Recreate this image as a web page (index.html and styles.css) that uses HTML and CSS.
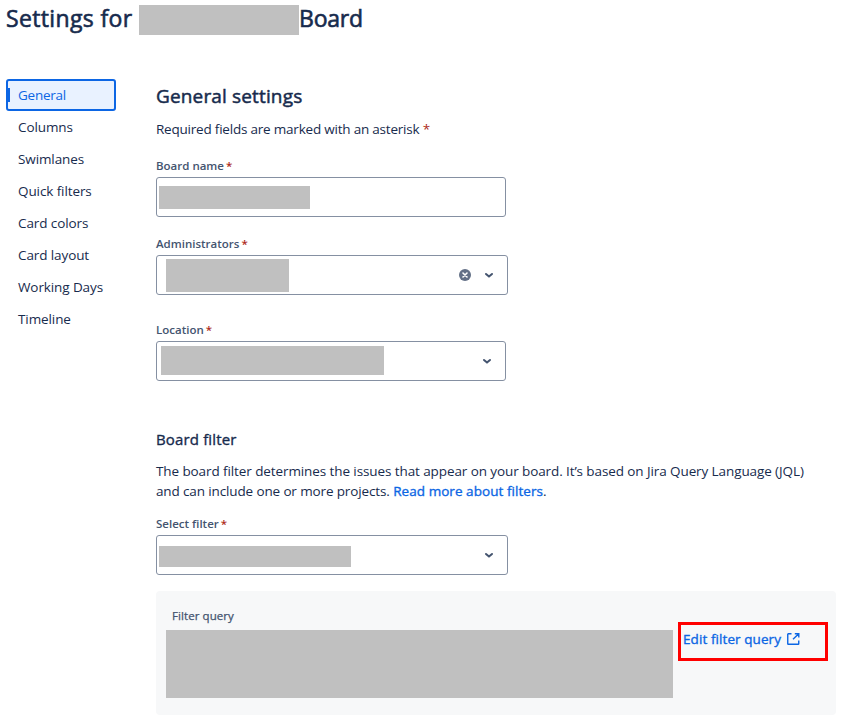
FILE: index.html
```html
<!DOCTYPE html>
<html lang="en">
<head>
<meta charset="utf-8">
<title>Board settings</title>
<link rel="stylesheet" href="styles.css">
</head>
<body>
<header class="page-header">
  <h1 class="page-title"><span class="title-lead">Settings for</span><span class="redacted redacted-title"></span><span class="title-end">Board</span></h1>
</header>
<div class="layout">
  <nav class="sidebar">
    <a class="nav-item active">General</a>
    <a class="nav-item">Columns</a>
    <a class="nav-item">Swimlanes</a>
    <a class="nav-item">Quick filters</a>
    <a class="nav-item">Card colors</a>
    <a class="nav-item">Card layout</a>
    <a class="nav-item">Working Days</a>
    <a class="nav-item">Timeline</a>
  </nav>
  <main class="content">
    <h2 class="section-title">General settings</h2>
    <p class="hint">Required fields are marked with an asterisk <span class="required">*</span></p>

    <div class="field">
      <div class="label"><span>Board name</span><span class="required">*</span></div>
      <div class="control"><span class="redacted redacted-name"></span></div>
    </div>

    <div class="field field-admins">
      <div class="label"><span>Administrators</span><span class="required">*</span></div>
      <div class="control wide">
        <span class="redacted redacted-admins"></span>
        <span class="indicators">
          <svg class="clear" width="12" height="12" viewBox="0 0 12 12"><circle cx="6" cy="6" r="6" fill="#626f86"/><path d="M4 4l4 4M8 4l-4 4" stroke="#fff" stroke-width="1.6" stroke-linecap="round"/></svg>
          <svg width="10" height="8" viewBox="0 0 10 8"><path d="M2 3l3 2.6L8 3" fill="none" stroke="#44546f" stroke-width="2" stroke-linecap="round" stroke-linejoin="round"/></svg>
        </span>
      </div>
    </div>

    <div class="field field-location">
      <div class="label"><span>Location</span><span class="required">*</span></div>
      <div class="control">
        <span class="redacted redacted-location"></span>
        <span class="indicators">
          <svg width="10" height="8" viewBox="0 0 10 8"><path d="M2 3l3 2.6L8 3" fill="none" stroke="#44546f" stroke-width="2" stroke-linecap="round" stroke-linejoin="round"/></svg>
        </span>
      </div>
    </div>

    <h3 class="sub-title">Board filter</h3>
    <p class="description"><span class="line-one">The board filter determines the issues that appear on your board. It’s based on Jira Query Language (JQL)</span><br><span class="line-two">and can include one or more projects.</span> <a class="link">Read more about filters</a>.</p>

    <div class="field">
      <div class="label"><span>Select filter</span><span class="required">*</span></div>
      <div class="control wide">
        <span class="redacted redacted-filter"></span>
        <span class="indicators">
          <svg width="10" height="8" viewBox="0 0 10 8"><path d="M2 3l3 2.6L8 3" fill="none" stroke="#44546f" stroke-width="2" stroke-linecap="round" stroke-linejoin="round"/></svg>
        </span>
      </div>
    </div>

    <section class="query-panel">
      <div class="query">
        <div class="query-label">Filter query</div>
        <div class="redacted redacted-query"></div>
      </div>
      <a class="edit-link"><span class="edit-text">Edit filter query</span><svg width="13" height="12" viewBox="0 0 13 12" fill="none" stroke="#0c66e4" stroke-width="1.4"><path d="M4.5 .75H1.25Q.75 .75 .75 1.25v9.5q0 .5 .5 .5h10q.5 0 .5-.5V7.5M7.8 .75h4V4.5M11.5 1L6 6.2"/></svg></a>
    </section>
  </main>
</div>
</body>
</html>
```
FILE: styles.css
```css
* { box-sizing: border-box; }
body {
  margin: 0;
  background: #fff;
  color: #172b4d;
  font-family: "Open Sans", "Noto Sans", sans-serif;
  font-size: 13.5px;
  line-height: 20px;
}
h1, h2, h3, p { margin: 0; }
.redacted { display: block; flex: none; background: #c0c0c0; }
.page-header { padding: 5px 0 0 6px; height: 79px; }
.page-title {
  display: flex;
  height: 30px;
  font-size: 23px;
  font-weight: 500;
  line-height: 27px;
  white-space: nowrap;
  -webkit-text-stroke: 0.6px;
}
.title-lead { width: 133px; letter-spacing: 0.35px; }
.title-end { letter-spacing: -0.2px; }
.redacted-title { width: 160px; height: 30px; }
.layout { display: flex; padding-left: 6px; }
.sidebar { width: 110px; margin-right: 40px; flex: none; letter-spacing: -0.1px; }
.nav-item { display: block; height: 32px; padding: 6px 12px; white-space: nowrap; }
.nav-item.active {
  padding: 4px 10px;
  border: 2px solid #0c66e4;
  border-radius: 3px;
  background: linear-gradient(#0c66e4, #0c66e4) left center / 2px 14px no-repeat #e9f2ff;
  color: #0c66e4;
  letter-spacing: -0.25px;
}
.content { width: 680px; flex: none; }
.section-title {
  height: 40px;
  padding-top: 5px;
  font-size: 19px;
  font-weight: 500;
  line-height: 24px;
  letter-spacing: 0.15px;
  -webkit-text-stroke: 0.5px;
}
.hint { height: 39px; white-space: nowrap; letter-spacing: -0.21px; }
.required { color: #ae2a19; }
.label { display: flex; gap: 2px; height: 19px; line-height: 16px; font-size: 11.5px; font-weight: 600; color: #44546f; }
.control {
  display: flex;
  width: 350px;
  height: 40px;
  border: 1px solid #8590a2;
  border-radius: 3px;
}
.control.wide { width: 352px; }
.redacted-name { width: 151px; height: 23px; margin: 8px 0 0 2px; }
.redacted-admins { width: 123px; height: 33px; margin: 3px 0 0 9px; }
.redacted-location { width: 223px; height: 29px; margin: 4px 0 0 4px; }
.redacted-filter { width: 192px; height: 21px; margin: 10px 0 0 2px; }
.indicators { display: flex; align-items: center; gap: 13px; margin: 0 13px 0 auto; }
.field-admins { margin-top: 19px; }
.field-location { margin-top: 27px; }
.sub-title {
  margin-top: 48px;
  height: 32px;
  font-size: 15px;
  font-weight: 500;
  line-height: 20px;
  letter-spacing: 0.15px;
  -webkit-text-stroke: 0.35px;
}
.description { height: 55px; white-space: nowrap; }
.line-one { letter-spacing: -0.095px; }
.line-two { letter-spacing: -0.13px; }
.link, .edit-link { color: #0c66e4; font-weight: 500; -webkit-text-stroke: 0.35px; letter-spacing: 0.05px; }
.query-panel { display: flex; margin-top: 16px; height: 124px; border-radius: 4px; background: #f7f8f9; }
.query { width: 507px; margin: 16px 5px 0 10px; }
.query-label {
  height: 23px;
  padding-left: 6px;
  font-size: 11.5px;
  font-weight: 500;
  line-height: 17px;
  letter-spacing: 0.08px;
  color: #44546f;
  -webkit-text-stroke: 0.25px;
}
.redacted-query { height: 68px; }
.edit-link {
  display: flex;
  gap: 6px;
  width: 150px;
  height: 39px;
  margin-top: 31px;
  padding: 4px 0 0 2px;
  border: 3px solid #f00;
  white-space: nowrap;
}
.edit-text { letter-spacing: 0.08px; }
.edit-link svg { margin-top: 4px; }
```
